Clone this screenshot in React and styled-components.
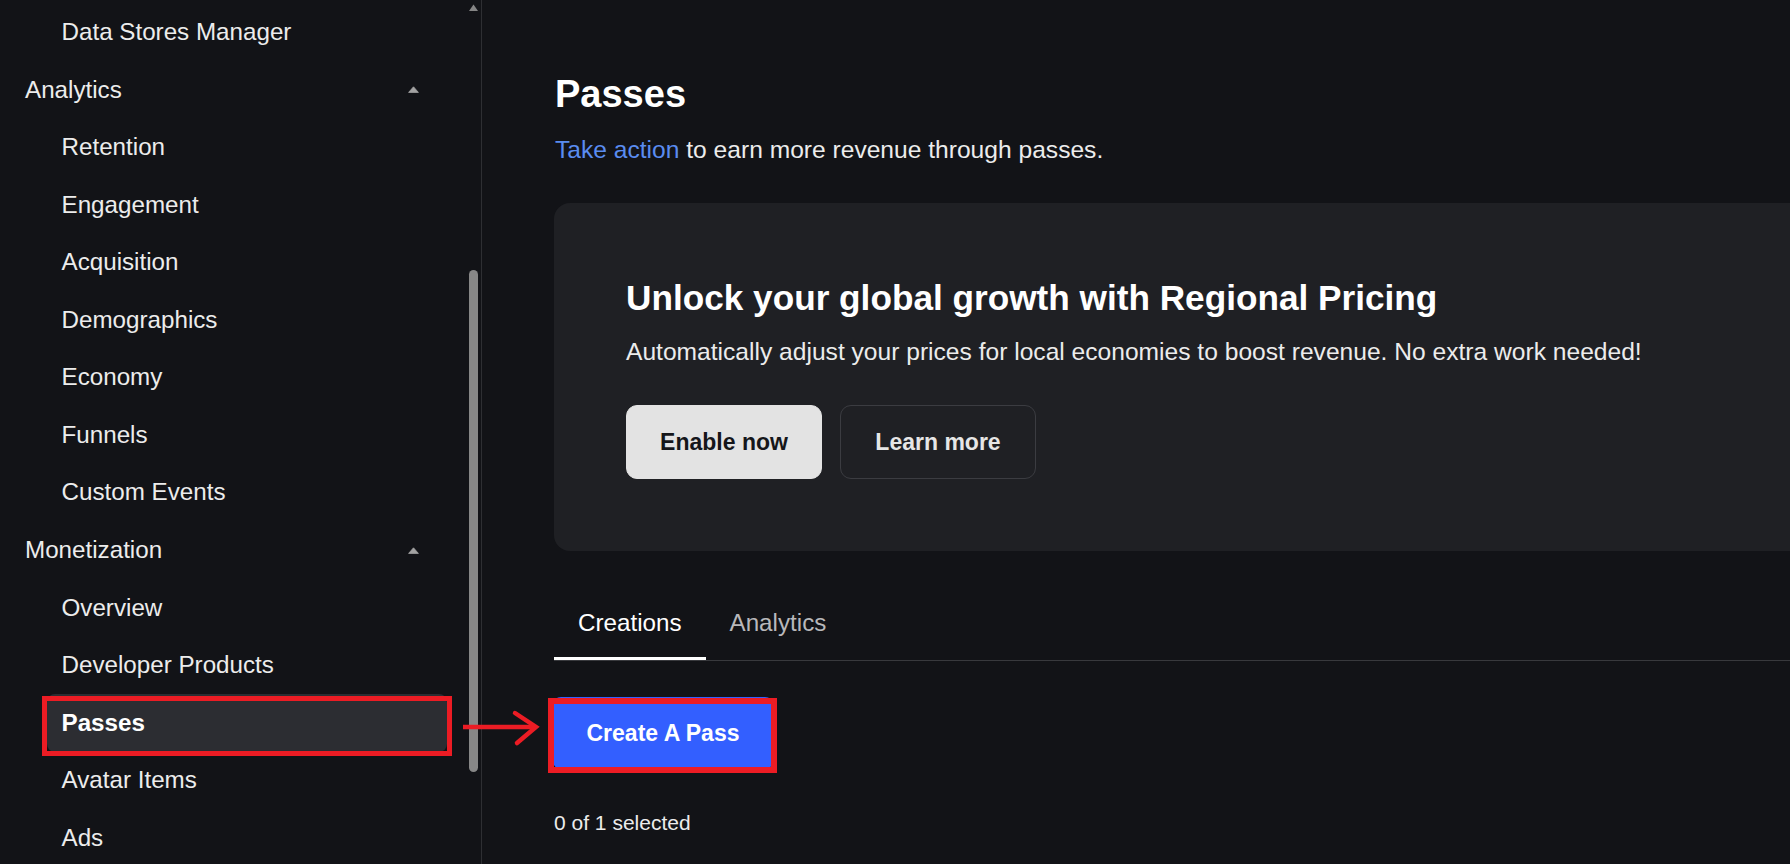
import React from "react";
import styled, { createGlobalStyle } from "styled-components";

const GlobalStyle = createGlobalStyle`
  html, body {
    margin: 0;
    padding: 0;
    background: #121317;
    overflow: hidden;
  }
  body {
    font-family: "Liberation Sans", Arial, sans-serif;
    color: #ececec;
  }
  * { box-sizing: border-box; }
`;

const Page = styled.div`
  display: flex;
  width: 100vw;
  height: 100vh;
  background: #121317;
  overflow: hidden;
`;

const Sidebar = styled.aside`
  display: flex;
  flex: 0 0 482px;
  width: 482px;
  height: 100%;
  border-right: 1px solid #2e2f33;
  overflow: hidden;
`;

const NavList = styled.nav`
  flex: 1;
  display: flex;
  flex-direction: column;
  padding-top: 3.2px;
  overflow: hidden;
`;

const GroupHeader = styled.div`
  flex: 0 0 57.57px;
  display: flex;
  align-items: center;
  justify-content: space-between;
  padding: 0 50px 0 25px;
  font-size: 24.2px;
  color: #ececec;
`;

const NavItem = styled.div`
  position: relative;
  flex: 0 0 57.57px;
  display: flex;
  align-items: center;
  margin: 0 22px 0 47px;
  padding-left: 14.5px;
  border-radius: 8px;
  font-size: 24.2px;
  color: ${(p) => (p.$active ? "#ffffff" : "#ececec")};
  font-weight: ${(p) => (p.$active ? 700 : 400)};
  background: ${(p) => (p.$active ? "#2c2d32" : "transparent")};
`;

const SideHighlight = styled.div`
  position: absolute;
  left: -5px;
  right: -5px;
  top: 2px;
  bottom: -4.4px;
  border: 5px solid #ec1c24;
  pointer-events: none;
`;

const ScrollTrack = styled.div`
  flex: 0 0 9px;
  display: flex;
  flex-direction: column;
  margin-right: 3px;
  padding-top: 4px;
`;

const ScrollThumb = styled.div`
  margin-top: 259px;
  height: 502px;
  width: 9px;
  border-radius: 4.5px;
  background: #878787;
`;

const Main = styled.main`
  flex: 1;
  min-width: 0;
  padding: 71px 0 0 72px;
`;

const Title = styled.h1`
  margin: 0;
  font-size: 38px;
  line-height: 46px;
  font-weight: 700;
  color: #ffffff;
  padding-left: 1px;
`;

const Subtitle = styled.p`
  margin: 18px 0 0;
  font-size: 24.6px;
  line-height: 30px;
  color: #ececec;
  padding-left: 1px;
`;

const TextLink = styled.a`
  color: #5a8cf0;
  text-decoration: none;
`;

const PromoCard = styled.section`
  margin: 38px -40px 0 0;
  padding: 75px 72px 72px;
  background: #1f2024;
  border-radius: 16px;
`;

const PromoTitle = styled.h2`
  margin: 0;
  font-size: 35.2px;
  line-height: 40px;
  font-weight: 700;
  color: #ffffff;
`;

const PromoText = styled.p`
  margin: 19px 0 0;
  font-size: 24.6px;
  line-height: 30px;
  color: #ececec;
`;

const ButtonRow = styled.div`
  display: flex;
  gap: 18px;
  margin-top: 38px;
`;

const PromoButton = styled.button`
  height: 74px;
  width: 196px;
  border-radius: 11px;
  font-family: inherit;
  font-size: 23px;
  font-weight: 700;
  cursor: pointer;
  background: ${(p) => (p.$primary ? "#e3e3e3" : "transparent")};
  color: ${(p) => (p.$primary ? "#15161a" : "#e6e6e6")};
  border: 1px solid ${(p) => (p.$primary ? "#e3e3e3" : "#3b3c41")};
`;

const TabBar = styled.div`
  display: flex;
  margin-top: 34px;
  border-bottom: 1px solid #38393d;
`;

const Tab = styled.div`
  padding: 23px 24px 19px;
  font-size: 24.2px;
  line-height: 30px;
  color: ${(p) => (p.$active ? "#ffffff" : "#b8b8bb")};
  border-bottom: 3px solid ${(p) => (p.$active ? "#ffffff" : "transparent")};
`;

const CreateWrap = styled.div`
  position: relative;
  display: inline-flex;
  margin: 36px 0 0 -1px;
`;

const CreateButton = styled.button`
  width: 220px;
  height: 72px;
  border: none;
  border-radius: 8px;
  background: #335fff;
  color: #ffffff;
  font-family: inherit;
  font-size: 23px;
  font-weight: 700;
  cursor: pointer;
`;

const ButtonHighlight = styled.div`
  position: absolute;
  left: -5px;
  top: 1px;
  right: -4px;
  bottom: -4px;
  border: 6px solid #ec1c24;
  pointer-events: none;
`;

const Arrow = styled.svg`
  position: absolute;
  left: -92px;
  top: 14px;
  width: 78px;
  height: 34px;
  overflow: visible;
  z-index: 2;
`;

const SelectionInfo = styled.div`
  margin-top: 40px;
  font-size: 21px;
  line-height: 28px;
  color: #ececec;
`;

const Caret = () => (
  <svg width="11" height="7" viewBox="0 0 11 7">
    <path d="M5.5 0.8 L10.4 6.4 H0.6 Z" fill="#a3a3a3" stroke="#a3a3a3" strokeWidth="0.8" strokeLinejoin="round" />
  </svg>
);

const ScrollUp = () => (
  <svg width="9" height="7" viewBox="0 0 9 7">
    <path d="M4.5 0.5 L9 7 H0 Z" fill="#858585" />
  </svg>
);

const nav = [
  { type: "item", label: "Data Stores Manager" },
  { type: "group", label: "Analytics" },
  { type: "item", label: "Retention" },
  { type: "item", label: "Engagement" },
  { type: "item", label: "Acquisition" },
  { type: "item", label: "Demographics" },
  { type: "item", label: "Economy" },
  { type: "item", label: "Funnels" },
  { type: "item", label: "Custom Events" },
  { type: "group", label: "Monetization" },
  { type: "item", label: "Overview" },
  { type: "item", label: "Developer Products" },
  { type: "item", label: "Passes", active: true },
  { type: "item", label: "Avatar Items" },
  { type: "item", label: "Ads" },
];

export default function App() {
  return (
    <>
      <GlobalStyle />
      <Page>
        <Sidebar>
          <NavList>
            {nav.map((n) =>
              n.type === "group" ? (
                <GroupHeader key={n.label}>
                  <span>{n.label}</span>
                  <Caret />
                </GroupHeader>
              ) : (
                <NavItem key={n.label} $active={n.active}>
                  {n.label}
                  {n.active && <SideHighlight />}
                </NavItem>
              )
            )}
          </NavList>
          <ScrollTrack>
            <ScrollUp />
            <ScrollThumb />
          </ScrollTrack>
        </Sidebar>
        <Main>
          <Title>Passes</Title>
          <Subtitle>
            <TextLink href="#">Take action</TextLink> to earn more revenue through passes.
          </Subtitle>
          <PromoCard>
            <PromoTitle>Unlock your global growth with Regional Pricing</PromoTitle>
            <PromoText>
              Automatically adjust your prices for local economies to boost revenue. No extra work needed!
            </PromoText>
            <ButtonRow>
              <PromoButton $primary>Enable now</PromoButton>
              <PromoButton>Learn more</PromoButton>
            </ButtonRow>
          </PromoCard>
          <TabBar>
            <Tab $active>Creations</Tab>
            <Tab>Analytics</Tab>
          </TabBar>
          <CreateWrap>
            <CreateButton>Create A Pass</CreateButton>
            <ButtonHighlight />
            <Arrow viewBox="0 0 78 34">
              <path d="M2 16 H74" stroke="#ec1c24" strokeWidth="4.5" fill="none" />
              <path d="M54 2 L75 16 L56 32" stroke="#ec1c24" strokeWidth="4.5" fill="none" strokeLinecap="round" strokeLinejoin="miter" />
            </Arrow>
          </CreateWrap>
          <SelectionInfo>0 of 1 selected</SelectionInfo>
        </Main>
      </Page>
    </>
  );
}
